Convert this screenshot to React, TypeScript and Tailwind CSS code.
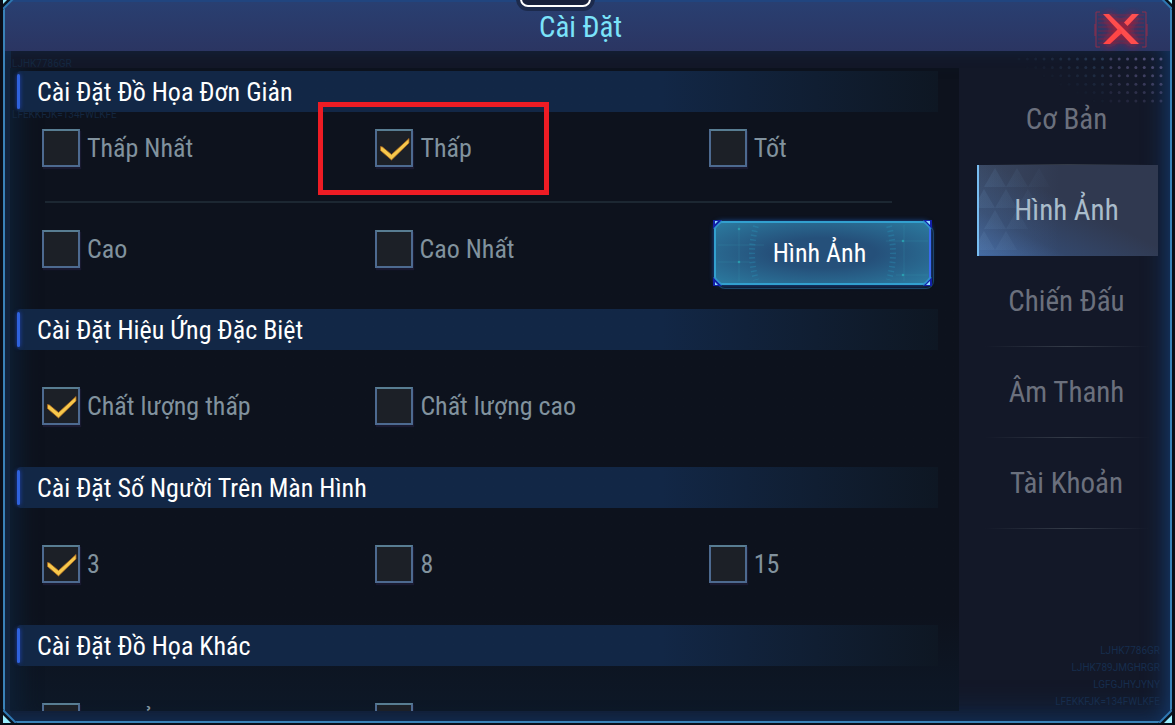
import { useState } from "react";
import type { ReactNode } from "react";

const TABS = ["Cơ Bản", "Hình Ảnh", "Chiến Đấu", "Âm Thanh", "Tài Khoản"];

const CODES = ["LJHK7786GR", "LJHK789JMGHRGR", "LGFGJHYJYNY", "LFEKKFJK=134FWLKFE"];

type OptionProps = {
  label: string;
  checked: boolean;
  onChange: () => void;
  children?: ReactNode;
};

const Option = ({ label, checked, onChange, children }: OptionProps) => {
  return (
    <label className="relative flex items-center gap-[7px] text-[26px] leading-8 text-[#81929e] cursor-pointer">
      <span className="relative size-[38px] shrink-0">
        <input
          type="checkbox"
          checked={checked}
          onChange={onChange}
          className="block size-full appearance-none border-2 border-[#4d6a90] border-t-[#587d92] bg-[#1c2027] shadow-[1px_2px_1px_#1a1a30] cursor-pointer"
        />
        {checked && (
          <svg viewBox="0 0 38 38" className="pointer-events-none absolute inset-0 size-full">
            <path
              d="M5.5 17.5L7.5 18L16.5 25.5L34 9.5L34 14L16.5 31L5.5 21.5Z"
              fill="#f6c84c"
              stroke="#a8641c"
              strokeWidth="0.8"
            />
          </svg>
        )}
      </span>
      <span>{label}</span>
      {children}
    </label>
  );
};

const SectionTitle = ({ children }: { children: ReactNode }) => {
  return (
    <div className="ml-[7px] mr-[21px] flex h-[41px] shrink-0 items-center rounded-l bg-linear-to-r from-[#122746] from-70% to-[#0e1723]">
      <span className="h-[35px] w-[3px] rounded-sm bg-[#2f62dc] shadow-[0_0_4px_#2347c0]" />
      <h2 className="pl-[17px] text-[26px] leading-8 text-white">{children}</h2>
    </div>
  );
};

const Row = ({ children, className = "" }: { children: ReactNode; className?: string }) => {
  return <div className={`grid grid-cols-[3fr_3fr_2fr] pl-8 pr-7 ${className}`}>{children}</div>;
};

const GlowButton = ({ children }: { children: ReactNode }) => {
  return (
    <button
      type="button"
      className="relative ml-[7px] h-16 w-[217px] cursor-pointer rounded-lg border-2 border-[#32a0cf] border-r-[#3a6af0] bg-radial from-[#25507a] from-35% to-[#2b7ba0] pr-1.5 text-[26px] leading-8 text-white shadow-[0_0_5px_#1b4fa0,3px_4px_0_-1px_#0e1626,3px_4px_0_#1c4562]"
    >
      <svg
        viewBox="0 0 217 64"
        preserveAspectRatio="none"
        className="pointer-events-none absolute -inset-0.5 h-16 w-[217px] overflow-visible"
      >
        <g stroke="#35a0b4" strokeWidth="0.6" opacity="0.35">
          <path d="M25 4V60M4 41H36M4 24H50M190 4V60M172 20H214M182 54H214" />
        </g>
        <g fill="none" stroke="#2a9fc4" strokeWidth="6" strokeDasharray="1.5 3" opacity="0.3">
          <path d="M42 5Q34 32 42 59M175 5Q183 32 175 59" />
        </g>
        <g fill="#2aa7b5" opacity="0.8">
          <circle cx="25" cy="8" r="1.3" />
          <circle cx="25" cy="41" r="1.3" />
          <circle cx="189" cy="20" r="1.3" />
          <circle cx="189" cy="54" r="1.3" />
        </g>
        <path
          d="M-1 -1H8L-1 8ZM218 -1H209L218 8ZM-1 65H8L-1 56ZM218 65H209L218 56Z"
          fill="#1220a8"
        />
        <path d="M0 8L8 0M209 0L217 8M0 56L8 64M209 64L217 56" stroke="#2f93cc" strokeWidth="1.5" />
        <path d="M1 0H4L1 3ZM216 0H212L216 4ZM1 64H4L1 61ZM216 64H212L216 60Z" fill="#8fdcff" />
      </svg>
      <span className="relative">{children}</span>
    </button>
  );
};

const CloseIcon = () => (
  <svg viewBox="0 0 54 40" className="h-10 w-[54px] overflow-visible">
    <defs>
      <filter id="glow" x="-30%" y="-30%" width="160%" height="160%">
        <feGaussianBlur stdDeviation="4" />
      </filter>
    </defs>
    <path d="M12 6L42 34M42 6L12 34" stroke="#d0182c" strokeWidth="9" filter="url(#glow)" opacity="0.75" />
    <path
      d="M4 5H50M4 9H50M4 13H50M4 17H50M4 21H50M4 25H50M4 29H50M4 33H50"
      stroke="#a01c38"
      strokeWidth="1"
      opacity="0.5"
    />
    <path d="M6 2H2V37H6M48 2H52V37H48M1 14V26M53 14V26" fill="none" stroke="#a82a44" strokeWidth="1" opacity="0.8" />
    <path d="M9 4H15L45 34H37Z" fill="#ff4d4d" />
    <path d="M38 4H45L33.5 16L30 12.5Z" fill="#ff5050" />
    <path d="M9 34H16L28.5 22.5L25 18Z" fill="#ff4646" />
  </svg>
);

// halftone dots that fade to the left and downwards
const Dots = () => {
  const dots = [];
  for (let row = 0; row < 6; row++) {
    for (let col = 0; col < 18; col++) {
      const opacity = Math.max(0, 0.75 - (17 - col) * 0.04 - row * 0.08);
      dots.push(
        <circle
          key={`${row}-${col}`}
          cx={3 + col * 8.35}
          cy={3 + row * 8.4}
          r="1.5"
          fill={col > 10 ? "#6a6698" : "#3f5f86"}
          opacity={opacity}
        />
      );
    }
  }
  return (
    <svg viewBox="0 0 148 50" className="pointer-events-none absolute right-1.5 top-[5px] h-[50px] w-[148px]">
      {dots}
    </svg>
  );
};

const Corner = ({ className }: { className: string }) => (
  <svg viewBox="0 0 14 14" className={`pointer-events-none absolute size-3.5 ${className}`}>
    <path d="M0 0H14L0 14Z" fill="#0a1420" />
    <path d="M0 0H8L0 8Z" fill="#9aeeff" />
    <path d="M13 0L0 13" stroke="#2f78b4" strokeWidth="2" />
  </svg>
);

const Codes = ({ lines, className }: { lines: string[]; className: string }) => (
  <div aria-hidden="true" className={`pointer-events-none absolute flex flex-col font-['Roboto'] text-[10px] leading-[17px] ${className}`}>
    {lines.map((line) => (
      <p key={line}>{line}</p>
    ))}
  </div>
);

const App = () => {
  const [tab, setTab] = useState("Hình Ảnh");
  const [graphics, setGraphics] = useState("Thấp");
  const [effects, setEffects] = useState("Chất lượng thấp");
  const [people, setPeople] = useState("3");
  const [others, setOthers] = useState<string[]>([]);

  const toggleOther = (name: string) => {
    setOthers(others.includes(name) ? others.filter((o) => o !== name) : [...others, name]);
  };

  const graphicsOption = (name: string, children?: ReactNode) => (
    <Option label={name} checked={graphics === name} onChange={() => setGraphics(name)}>
      {children}
    </Option>
  );

  return (
    <div className="h-screen overflow-hidden bg-[#0a0e18] pb-0.5 pl-[3px] pr-[3px] font-['Roboto_Condensed',Roboto,sans-serif]">
      <div className="relative flex h-full flex-col border-x-2 border-b-2 border-[#3a82b8] bg-[#131828]">
        {/* Header */}
        <header className="relative flex h-[51px] shrink-0 items-center justify-center border-t-2 border-[#21457f] bg-linear-to-b from-[#293f71] to-[#2b3562] pr-3.5">
          <h1 className="text-[29px] leading-9 text-[#7be3fa]">Cài Đặt</h1>
          <div className="absolute -top-5 left-1/2 h-[29px] w-[79px] -translate-x-[72px] rounded-xl border-4 border-[#1c2a4c] bg-[#18213c]">
            <div className="size-full rounded-lg border-2 border-white" />
          </div>
          <button type="button" aria-label="Đóng" className="absolute right-[22px] top-2 cursor-pointer">
            <CloseIcon />
          </button>
        </header>

        {/* Body */}
        <div className="relative flex min-h-0 flex-1 pb-2.5 pl-[5px] pt-[17px] shadow-[inset_-14px_0_22px_-10px_#14386a,inset_6px_0_0_#13253f,inset_0_-26px_26px_-16px_#12294a]">
          <main className="relative flex min-w-0 flex-1 flex-col overflow-hidden bg-linear-to-b from-[#0d121d] from-85% to-[#0d1827] pt-[3px] shadow-[inset_24px_0_22px_-16px_#0e2036]">
            <SectionTitle>Cài Đặt Đồ Họa Đơn Giản</SectionTitle>
            <div className="shrink-0 pb-6 pt-[17px]">
              <Row>
                {graphicsOption("Thấp Nhất")}
                {graphicsOption(
                  "Thấp",
                  <span className="pointer-events-none absolute -left-[57px] -top-[27px] h-[93px] w-[231px] border-[5px] border-[#ed1c24]" />
                )}
                {graphicsOption("Tốt")}
              </Row>
              <hr className="ml-[35px] mr-[67px] mt-[34px] border-t-2 border-[#1c2732]" />
              <Row className="mt-[18px]">
                <div className="flex h-14 items-center">{graphicsOption("Cao")}</div>
                <div className="flex h-14 items-center">{graphicsOption("Cao Nhất")}</div>
                <GlowButton>Hình Ảnh</GlowButton>
              </Row>
            </div>

            <SectionTitle>Cài Đặt Hiệu Ứng Đặc Biệt</SectionTitle>
            <Row className="shrink-0 pb-[42px] pt-[37px]">
              {["Chất lượng thấp", "Chất lượng cao"].map((name) => (
                <Option key={name} label={name} checked={effects === name} onChange={() => setEffects(name)} />
              ))}
            </Row>

            <SectionTitle>Cài Đặt Số Người Trên Màn Hình</SectionTitle>
            <Row className="shrink-0 pb-[42px] pt-[37px]">
              {["3", "8", "15"].map((name) => (
                <Option key={name} label={name} checked={people === name} onChange={() => setPeople(name)} />
              ))}
            </Row>

            <SectionTitle>Cài Đặt Đồ Họa Khác</SectionTitle>
            <Row className="shrink-0 pt-[37px]">
              {["Hình Ảnh", "Bóng Râm"].map((name) => (
                <Option key={name} label={name} checked={others.includes(name)} onChange={() => toggleOther(name)} />
              ))}
            </Row>
          </main>

          {/* Tabs */}
          <aside className="relative w-[211px] shrink-0">
            <nav className="flex flex-col pl-[18px] pr-3 pt-[6px]">
              {TABS.map((name) => (
                <button
                  key={name}
                  type="button"
                  onClick={() => setTab(name)}
                  className={
                    tab === name
                      ? "relative h-[91px] cursor-pointer border-l-2 border-[#78bdf2] bg-linear-to-tr from-[#3f659f] via-[#33476b] via-25% to-[#303950] to-55% pr-1 text-[29px] text-[#a9bccb]"
                      : "relative h-[91px] cursor-pointer pr-0.5 text-[29px] text-[#6b707d]"
                  }
                >
                  {tab === name ? (
                    <svg viewBox="0 0 110 90" className="pointer-events-none absolute left-0 top-0 h-[90px] w-[110px]">
                      <defs>
                        <linearGradient id="fade" gradientUnits="userSpaceOnUse" x1="0" y1="45" x2="80" y2="45">
                          <stop offset="0" stopColor="#6b93bd" stopOpacity="0.16" />
                          <stop offset="1" stopColor="#6b93bd" stopOpacity="0" />
                        </linearGradient>
                      </defs>
                      <path fill="url(#fade)" d="M0 0H110V90H0Z" />
                      <path
                        fill="url(#fade)"
                        d="M16 3L27 22H5ZM38 3L49 22H27ZM60 3L71 22H49ZM5 24L16 43H0V33ZM27 24L38 43H16ZM49 24L60 43H38ZM16 45L27 64H5ZM38 45L49 64H27ZM5 66L16 85H0V75ZM27 66L38 85H16Z"
                      />
                    </svg>
                  ) : (
                    <span className="absolute inset-x-2 bottom-0 h-px bg-linear-to-r from-transparent via-[#343b48] to-transparent" />
                  )}
                  <span className="relative">{name}</span>
                </button>
              ))}
            </nav>
          </aside>
          <Dots />
          <Codes lines={[CODES[0], CODES[3]]} className="left-[7px] top-1 gap-[34px] text-[#142740]" />
          <Codes lines={CODES} className="bottom-[11px] right-2.5 text-right text-[#162d4d]" />
        </div>

        <Corner className="-left-0.5 -top-1" />
        <Corner className="-right-0.5 -top-1 rotate-90" />
        <Corner className="-bottom-0.5 -left-0.5 -rotate-90" />
        <Corner className="-bottom-0.5 -right-0.5 rotate-180" />
      </div>
    </div>
  );
};

export default App;
